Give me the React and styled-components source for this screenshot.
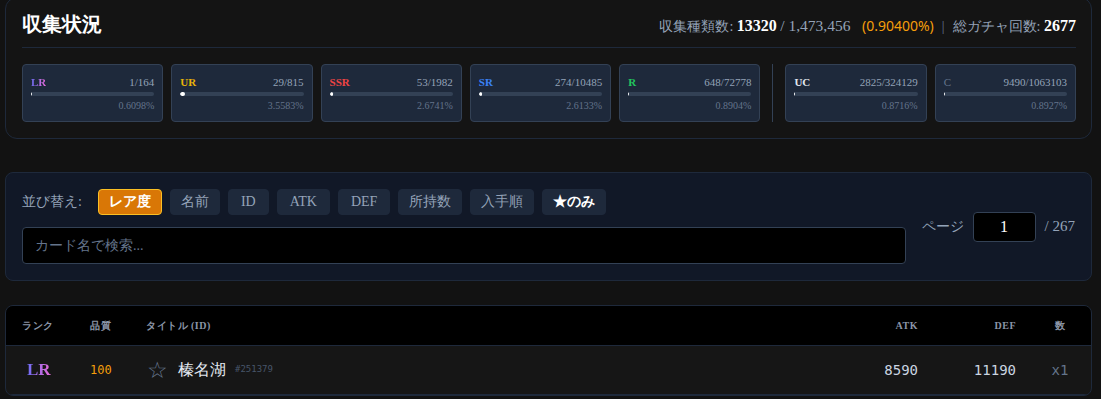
import React from "react";
import styled, { createGlobalStyle, css } from "styled-components";

const GlobalStyle = createGlobalStyle`
  html, body { margin: 0; padding: 0; background: #121212; }
  body { font-family: "Liberation Serif", serif; color: #e2e8f0; }
  * { box-sizing: border-box; }
`;

const Page = styled.div`
  padding: 0 9px 0 5px;
  display: flex;
  flex-direction: column;
`;

const StatsPanel = styled.section`
  margin-top: -3px;
  background: #141414;
  border: 1px solid #1e293b;
  border-radius: 12px;
  padding: 12px 15px 16px 16px;
`;

const HeaderRow = styled.div`
  display: flex;
  justify-content: space-between;
  align-items: center;
  padding-bottom: 9px;
  border-bottom: 1px solid #1e293b;
`;

const Title = styled.h2`
  margin: 0;
  font-size: 20px;
  line-height: 28px;
  font-weight: 700;
  color: #ffffff;
`;

const Summary = styled.div`
  font-size: 14px;
  color: #94a3b8;
  padding-top: 4px;
`;

const Strong = styled.b`
  color: #ffffff;
  font-weight: 700;
  font-size: 16px;
`;

const Total = styled.span`
  font-size: 15.5px;
`;

const Pct = styled.span`
  font-family: "Noto Sans", sans-serif;
  color: #f59e0b;
  margin-left: 8px;
`;

const Pipe = styled.span`
  margin: 0 8px;
  color: #64748b;
`;

const CardRow = styled.div`
  display: flex;
  gap: 8px;
  margin-top: 16px;
`;

const Card = styled.div`
  flex: 1;
  min-width: 0;
  background: #1e293b;
  border: 1px solid #334155;
  border-radius: 4px;
  padding: 9px 8px 8px;
`;

const CardTop = styled.div`
  display: flex;
  justify-content: space-between;
  align-items: center;
  font-size: 11px;
  line-height: 16px;
`;

const gradientText = css`
  background: linear-gradient(90deg, #6d6df5, #e86ad8);
  -webkit-background-clip: text;
  background-clip: text;
  color: transparent;
`;

const rarityColors = {
  LR: gradientText,
  UR: css`color: #eab308;`,
  SSR: css`color: #ef4444;`,
  SR: css`color: #3b82f6;`,
  R: css`color: #22c55e;`,
  UC: css`color: #e2e8f0;`,
  C: css`color: #64748b; font-weight: 400;`,
};

const RarityLabel = styled.span`
  font-weight: 700;
  ${(p) => rarityColors[p.$r]}
`;

const Count = styled.span`
  color: #94a3b8;
`;

const Bar = styled.div`
  margin-top: 2px;
  height: 4px;
  border-radius: 2px;
  background: #334155;
  overflow: hidden;
`;

const Fill = styled.div`
  height: 100%;
  background: #ffffff;
  border-radius: 2px;
  min-width: 1px;
`;

const CardPct = styled.div`
  margin-top: 3px;
  text-align: right;
  font-size: 10px;
  line-height: 14px;
  color: #64748b;
`;

const VSep = styled.div`
  width: 1px;
  background: #334155;
  margin: 0 4px;
`;

const ControlPanel = styled.section`
  margin-top: 33px;
  background: #111827;
  border: 1px solid #1e293b;
  border-radius: 8px;
  padding: 16px;
  display: flex;
  align-items: center;
  gap: 16px;
`;

const ControlMain = styled.div`
  flex: 1;
  display: flex;
  flex-direction: column;
  gap: 12px;
`;

const SortRow = styled.div`
  display: flex;
  align-items: center;
  gap: 8px;
`;

const SortLabel = styled.span`
  font-size: 14px;
  color: #94a3b8;
  margin-right: 8px;
`;

const SortButton = styled.button`
  height: 26px;
  padding: 0 ${(p) => (p.$latin ? 12 : 10)}px;
  border-radius: 4px;
  font-family: inherit;
  font-size: 14px;
  cursor: pointer;
  border: 1px solid ${(p) => (p.$active ? "#fbbf24" : "#1e293b")};
  background: ${(p) => (p.$active ? "#d97706" : "#1e293b")};
  color: ${(p) => (p.$active || p.$bright ? "#ffffff" : "#94a3b8")};
  font-weight: ${(p) => (p.$active || p.$bright ? 700 : 400)};
`;

const SearchInput = styled.input`
  height: 37px;
  width: 100%;
  background: #000000;
  border: 1px solid #334155;
  border-radius: 4px;
  padding: 0 12px;
  font-family: inherit;
  font-size: 14px;
  color: #e2e8f0;
  outline: none;
  &::placeholder { color: #64748b; }
`;

const Pager = styled.div`
  display: flex;
  align-items: center;
  gap: 9px;
  color: #94a3b8;
`;

const PageLabel = styled.span`
  font-size: 13.5px;
`;

const PageTotal = styled.span`
  font-size: 15px;
`;

const PageInput = styled.input`
  width: 63px;
  height: 30px;
  background: #000000;
  border: 1px solid #334155;
  border-radius: 4px;
  text-align: center;
  font-family: inherit;
  font-size: 16px;
  color: #ffffff;
  outline: none;
`;

const TablePanel = styled.section`
  margin-top: 24px;
  border: 1px solid #1e293b;
  border-radius: 8px;
  overflow: hidden;
  background: #161616;
`;

const gridCols = css`
  display: grid;
  grid-template-columns: 68px 56px 1fr 100px 98px 68px;
  padding: 0 7px 0 16px;
  align-items: center;
`;

const HeadRow = styled.div`
  ${gridCols}
  height: 40px;
  background: #000000;
  border-bottom: 1px solid #1e293b;
  font-size: 10px;
  font-weight: 700;
  letter-spacing: 0.5px;
  color: #8b95a7;
`;

const HeadCell = styled.div`
  text-align: ${(p) => p.$align || "left"};
  padding-left: ${(p) => (p.$align === "center" ? "20px" : "0")};
`;

const BodyRow = styled.div`
  ${gridCols}
  height: 49px;
  border-bottom: 1px solid #1e293b;
`;

const RankCell = styled.div`
  padding-left: 5px;
  font-size: 17px;
  font-weight: 700;
`;

const RankText = styled.span`
  ${gradientText}
`;

const Mono = styled.div`
  font-family: "DejaVu Sans Mono", "Liberation Mono", monospace;
  font-size: ${(p) => p.$size || 14}px;
  color: ${(p) => p.$color || "#cbd5e1"};
  text-align: ${(p) => p.$align || "left"};
  padding-left: ${(p) => (p.$align === "center" ? "20px" : "0")};
`;

const TitleCell = styled.div`
  display: flex;
  align-items: center;
`;

const Star = styled.span`
  font-size: 23px;
  color: #64748b;
  margin-left: 1px;
  margin-right: 10px;
  line-height: 1;
`;

const CardName = styled.span`
  font-size: 16px;
  color: #e2e8f0;
  margin-right: 9px;
`;

const CardId = styled.span`
  font-family: "DejaVu Sans Mono", monospace;
  font-size: 9px;
  color: #475569;
  margin-top: -3px;
`;

const rarities = [
  { r: "LR", got: 1, total: 164, pct: "0.6098%" },
  { r: "UR", got: 29, total: 815, pct: "3.5583%" },
  { r: "SSR", got: 53, total: 1982, pct: "2.6741%" },
  { r: "SR", got: 274, total: 10485, pct: "2.6133%" },
  { r: "R", got: 648, total: 72778, pct: "0.8904%" },
  null,
  { r: "UC", got: 2825, total: 324129, pct: "0.8716%" },
  { r: "C", got: 9490, total: 1063103, pct: "0.8927%" },
];

const sorts = [
  { label: "レア度" },
  { label: "名前" },
  { label: "ID", latin: true },
  { label: "ATK", latin: true },
  { label: "DEF", latin: true },
  { label: "所持数" },
  { label: "入手順" },
  { label: "★のみ" },
];

export default function App() {
  return (
    <>
      <GlobalStyle />
      <Page>
        <StatsPanel>
          <HeaderRow>
            <Title>収集状況</Title>
            <Summary>
              収集種類数: <Strong>13320</Strong> <Total>/ 1,473,456</Total>{" "}
              <Pct>(0.90400%)</Pct>
              <Pipe>|</Pipe>総ガチャ回数: <Strong>2677</Strong>
            </Summary>
          </HeaderRow>
          <CardRow>
            {rarities.map((c, i) =>
              c === null ? (
                <VSep key={i} />
              ) : (
                <Card key={c.r}>
                  <CardTop>
                    <RarityLabel $r={c.r}>{c.r}</RarityLabel>
                    <Count>
                      {c.got}/{c.total}
                    </Count>
                  </CardTop>
                  <Bar>
                    <Fill style={{ width: `${(c.got / c.total) * 100}%` }} />
                  </Bar>
                  <CardPct>{c.pct}</CardPct>
                </Card>
              )
            )}
          </CardRow>
        </StatsPanel>

        <ControlPanel>
          <ControlMain>
            <SortRow>
              <SortLabel>並び替え:</SortLabel>
              {sorts.map((s, i) => (
                <SortButton
                  key={s.label}
                  $active={i === 0}
                  $latin={s.latin}
                  $bright={s.label === "★のみ"}
                >
                  {s.label}
                </SortButton>
              ))}
            </SortRow>
            <SearchInput placeholder="カード名で検索..." />
          </ControlMain>
          <Pager>
            <PageLabel>ページ</PageLabel>
            <PageInput defaultValue="1" />
            <PageTotal>/ 267</PageTotal>
          </Pager>
        </ControlPanel>

        <TablePanel>
          <HeadRow>
            <HeadCell>ランク</HeadCell>
            <HeadCell>品質</HeadCell>
            <HeadCell>タイトル (ID)</HeadCell>
            <HeadCell $align="right">ATK</HeadCell>
            <HeadCell $align="right">DEF</HeadCell>
            <HeadCell $align="center">数</HeadCell>
          </HeadRow>
          <BodyRow>
            <RankCell>
              <RankText>LR</RankText>
            </RankCell>
            <Mono $size={12} $color="#f59e0b">100</Mono>
            <TitleCell>
              <Star>☆</Star>
              <CardName>榛名湖</CardName>
              <CardId>#251379</CardId>
            </TitleCell>
            <Mono $align="right">8590</Mono>
            <Mono $align="right">11190</Mono>
            <Mono $align="center" $color="#64748b">x1</Mono>
          </BodyRow>
        </TablePanel>
      </Page>
    </>
  );
}
